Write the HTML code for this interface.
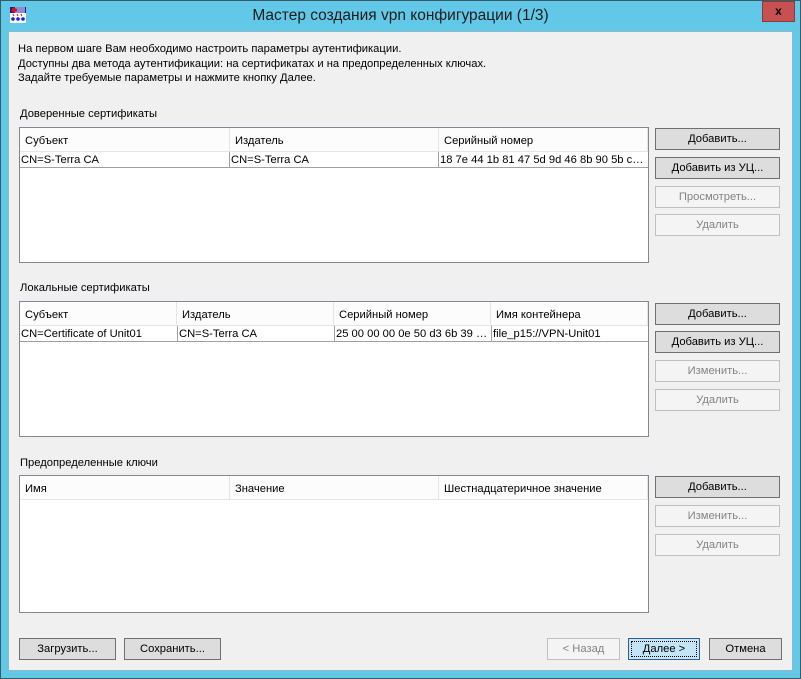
<!DOCTYPE html>
<html><head><meta charset="utf-8"><style>
*{box-sizing:border-box;margin:0;padding:0}
body{width:801px;height:679px;background:#62c8e8;font-family:"Liberation Sans",sans-serif;font-size:11.2px;color:#000;position:relative;overflow:hidden}
.frame{position:absolute;left:0;top:0;width:801px;height:679px;border:1px solid #3a5a66}
.client{position:absolute;left:8px;top:31px;width:785px;height:640px;background:#f0f0f0;border:1px solid #8fb8c8}
.a{position:absolute;white-space:nowrap}
.title{left:0;width:801px;top:7px;text-align:center;font-size:15.5px;color:#1c1c1c}
.close{position:absolute;left:762px;top:1px;width:33px;height:21px;background:#c75050;border:1px solid #8a3a3a;color:#000;font-weight:bold;font-size:12px;text-align:center;line-height:19px}
.list{position:absolute;left:19px;width:630px;background:#fff;border:1px solid #828790}
.hd{position:absolute;top:0;height:24px;background:#fcfcfc;border-right:1px solid #e5e5e5;border-bottom:1px solid #e5e5e5;padding:7px 0 0 5px;white-space:nowrap}
.row{position:absolute;top:24px;height:16px;left:0;width:628px;border-bottom:1px solid #a0a0a0}
.c{position:absolute;top:0;height:16px;padding:2px 2px 0 1px;border-left:1px solid #a0a0a0;white-space:nowrap;overflow:hidden;text-overflow:ellipsis}
.btn{position:absolute;height:22px;border:1px solid #707070;background:#dddddd;text-align:center;line-height:21px;white-space:nowrap}
.dis{border-color:#bfbfbf;background:#f4f4f4;color:#838383}
.rb{left:655px;width:125px}
</style></head><body>
<div class="frame"></div>
<svg class="a" style="left:10px;top:7px" width="16" height="16" viewBox="0 0 16 16">
<rect width="16" height="16" fill="#fff"/>
<rect x="0" y="0" width="16" height="6" fill="#1a1aa0"/>
<path d="M6 0v6M8 0v6M10 0v6M12 0v6M14 0v6" stroke="#fff" stroke-width="1"/>
<circle cx="4" cy="3" r="2.5" fill="#e01010"/>
<path d="M3 7l1 2M7 7l1 2M11 7l1 2" stroke="#e01010"/>
<circle cx="3" cy="12" r="1.8" fill="#1a1ae0"/><circle cx="8" cy="12" r="1.8" fill="#1a1ae0"/><circle cx="13" cy="12" r="1.8" fill="#1a1ae0"/>
</svg>
<div class="a title">Мастер создания vpn конфигурации (1/3)</div>
<div class="close">x</div>
<div class="client"></div>
<div class="a" style="left:18px;top:42px;line-height:14.5px">На первом шаге Вам необходимо настроить параметры аутентификации.<br>Доступны два метода аутентификации: на сертификатах и на предопределенных ключах.<br>Задайте требуемые параметры и нажмите кнопку Далее.</div>

<div class="a" style="left:20px;top:108px">Доверенные сертификаты</div>
<div class="list" style="top:127px;height:136px">
<div class="hd" style="left:0;width:210px">Субъект</div>
<div class="hd" style="left:210px;width:209px">Издатель</div>
<div class="hd" style="left:419px;width:209px">Серийный номер</div>
<div class="row"><div class="c" style="left:0;width:210px;border-left:0">CN=S-Terra CA</div><div class="c" style="left:209px;width:210px">CN=S-Terra CA</div><div class="c" style="left:418px;width:210px">18 7e 44 1b 81 47 5d 9d 46 8b 90 5b c2 a1 f0</div></div>
</div>
<div class="btn rb" style="top:128px">Добавить...</div>
<div class="btn rb" style="top:157px">Добавить из УЦ...</div>
<div class="btn rb dis" style="top:186px">Просмотреть...</div>
<div class="btn rb dis" style="top:214px">Удалить</div>

<div class="a" style="left:20px;top:282px">Локальные сертификаты</div>
<div class="list" style="top:301px;height:136px">
<div class="hd" style="left:0;width:157px">Субъект</div>
<div class="hd" style="left:157px;width:157px">Издатель</div>
<div class="hd" style="left:314px;width:157px">Серийный номер</div>
<div class="hd" style="left:471px;width:157px">Имя контейнера</div>
<div class="row"><div class="c" style="left:0;width:157px;border-left:0">CN=Certificate of Unit01</div><div class="c" style="left:157px;width:157px">CN=S-Terra CA</div><div class="c" style="left:314px;width:157px">25 00 00 00 0e 50 d3 6b 39 0a 11</div><div class="c" style="left:471px;width:157px">file_p15://VPN-Unit01</div></div>
</div>
<div class="btn rb" style="top:303px">Добавить...</div>
<div class="btn rb" style="top:331px">Добавить из УЦ...</div>
<div class="btn rb dis" style="top:360px">Изменить...</div>
<div class="btn rb dis" style="top:389px">Удалить</div>

<div class="a" style="left:20px;top:457px">Предопределенные ключи</div>
<div class="list" style="top:475px;height:138px">
<div class="hd" style="left:0;width:210px">Имя</div>
<div class="hd" style="left:210px;width:209px">Значение</div>
<div class="hd" style="left:419px;width:209px">Шестнадцатеричное значение</div>
</div>
<div class="btn rb" style="top:476px">Добавить...</div>
<div class="btn rb dis" style="top:505px">Изменить...</div>
<div class="btn rb dis" style="top:534px">Удалить</div>

<div class="btn" style="left:19px;top:638px;width:97px">Загрузить...</div>
<div class="btn" style="left:124px;top:638px;width:97px">Сохранить...</div>
<div class="btn dis" style="left:547px;top:638px;width:73px">&lt; Назад</div>
<div class="btn" style="left:628px;top:638px;width:72px;background:#c4e5f6;border-color:#2c628b">Далее &gt;<div style="position:absolute;left:2px;top:2px;right:2px;bottom:2px;border:1px dotted #000"></div></div>
<div class="btn" style="left:709px;top:638px;width:73px">Отмена</div>
</body></html>
